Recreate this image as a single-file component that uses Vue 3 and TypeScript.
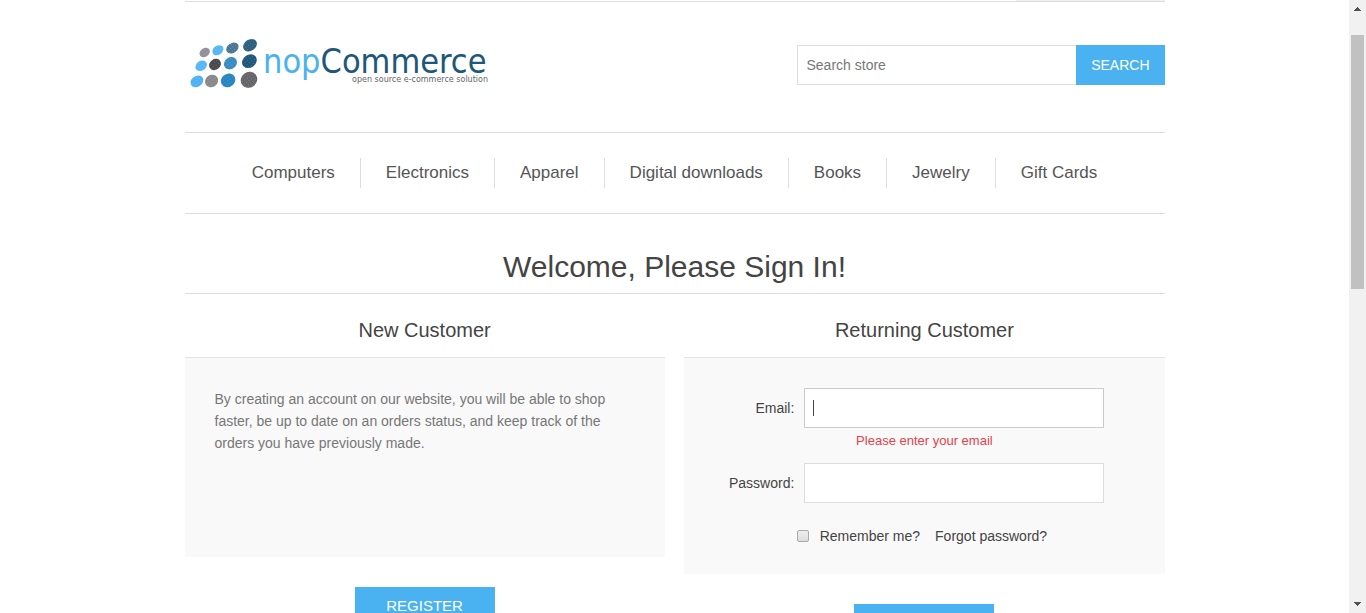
<script setup lang="ts">
import { ref } from 'vue'

interface Dot { x: number; y: number; rx: number; ry: number; fill: string }

const categories: string[] = ['Computers', 'Electronics', 'Apparel', 'Digital downloads', 'Books', 'Jewelry', 'Gift Cards']

const dots: Dot[] = [
  { x: 19.7, y: 17.5, rx: 5.6, ry: 4.2, fill: '#909095' },
  { x: 32.9, y: 15.2, rx: 6, ry: 4.5, fill: '#55b6f5' },
  { x: 47.4, y: 13, rx: 6.7, ry: 5, fill: '#487694' },
  { x: 65, y: 10.2, rx: 7.4, ry: 5.6, fill: '#2a5f80' },
  { x: 16.2, y: 30.8, rx: 6.2, ry: 4.8, fill: '#55b6f8' },
  { x: 30, y: 29.5, rx: 6.3, ry: 5.3, fill: '#48484b' },
  { x: 45.5, y: 28.2, rx: 6.9, ry: 5.8, fill: '#378bc2' },
  { x: 64.4, y: 26.2, rx: 7.8, ry: 6.4, fill: '#1e577a' },
  { x: 11.9, y: 46.4, rx: 6.9, ry: 5.4, fill: '#4eb1f2' },
  { x: 26.6, y: 46, rx: 6.8, ry: 6, fill: '#88888a' },
  { x: 43.1, y: 45.4, rx: 7.5, ry: 6.6, fill: '#2685c0' },
  { x: 64, y: 44.8, rx: 8.5, ry: 7.8, fill: '#656567' },
]

const search = ref('')
const email = ref('')
const password = ref('')
const remember = ref(false)
</script>

<template>
  <div class="window">
    <div class="viewport">
      <div class="page">
        <div class="flyout-edge"></div>
        <header class="header">
          <a href="#" class="logo" aria-label="nopCommerce">
            <svg width="310" height="55" viewBox="0 0 310 55">
              <defs>
                <pattern id="speckle" width="3" height="3" patternUnits="userSpaceOnUse">
                  <rect width="1" height="1" fill="#fff" opacity="0.22" />
                </pattern>
              </defs>
              <g v-for="(d, i) in dots" :key="i" :transform="`rotate(-35 ${d.x} ${d.y})`">
                <ellipse :cx="d.x" :cy="d.y" :rx="d.rx" :ry="d.ry" :fill="d.fill" />
                <ellipse :cx="d.x" :cy="d.y" :rx="d.rx" :ry="d.ry" fill="url(#speckle)" />
              </g>
              <text x="78" y="38" class="brand"><tspan class="brand-light">nop</tspan><tspan class="brand-dark">Commerce</tspan></text>
              <text x="303" y="47" class="tagline" text-anchor="end">open source e-commerce solution</text>
            </svg>
          </a>
          <form class="search" @submit.prevent>
            <input v-model="search" type="text" placeholder="Search store" aria-label="Search store" />
            <button type="submit">SEARCH</button>
          </form>
        </header>
        <nav class="menu">
          <ul>
            <li v-for="c in categories" :key="c"><a href="#">{{ c }}</a></li>
          </ul>
        </nav>
        <main>
          <h1>Welcome, Please Sign In!</h1>
          <div class="columns">
            <section class="column">
              <h2>New Customer</h2>
              <div class="panel intro">
                <p>By creating an account on our website, you will be able to shop faster, be up to date on an orders status, and keep track of the orders you have previously made.</p>
              </div>
              <button type="button" class="action">REGISTER</button>
            </section>
            <form class="column" novalidate @submit.prevent>
              <h2>Returning Customer</h2>
              <div class="panel">
                <div class="field">
                  <label for="email">Email:</label>
                  <div class="box active">
                    <input id="email" v-model="email" type="email" aria-describedby="email-error" />
                    <span v-if="!email" class="caret"></span>
                  </div>
                </div>
                <div id="email-error" class="error">Please enter your email</div>
                <div class="field">
                  <label for="password">Password:</label>
                  <div class="box"><input id="password" v-model="password" type="password" /></div>
                </div>
                <div class="options">
                  <input id="remember" v-model="remember" type="checkbox" />
                  <label for="remember">Remember me?</label>
                  <a href="#">Forgot password?</a>
                </div>
              </div>
              <button type="submit" class="action" aria-label="Log in"></button>
            </form>
          </div>
        </main>
      </div>
    </div>
    <div class="scrollbar" aria-hidden="true">
      <svg width="17" height="17" viewBox="0 0 17 17" shape-rendering="crispEdges"><path d="M8 7h1v1h1v1h1v1h1v1H5v-1h1V9h1V8h1z" fill="#505050" /></svg>
      <div class="track"><div class="thumb"></div></div>
      <svg width="17" height="17" viewBox="0 0 17 17" shape-rendering="crispEdges"><path d="M5 6h7v1h-1v1h-1v1H9v1H8V9H7V8H6V7H5z" fill="#505050" /></svg>
    </div>
  </div>
</template>

<style>
body {
  margin: 0;
  background: #fff;
}
</style>

<style scoped>
* {
  box-sizing: border-box;
}
.window {
  display: flex;
  height: 100vh;
  overflow: hidden;
  font: 14px/22px "Liberation Sans", Arial, sans-serif;
  color: #444;
}
.viewport {
  flex: 1;
  min-width: 0;
  overflow: hidden;
}
.page {
  max-width: 980px;
  margin: 0 auto;
}
input, button {
  margin: 0;
  font-family: inherit;
  font-size: 14px;
  border-radius: 0;
}
a {
  color: inherit;
  text-decoration: none;
}
.flyout-edge {
  width: 149px;
  height: 1px;
  margin-left: auto;
  background: #f0f0f0;
}
.header {
  display: flex;
  justify-content: space-between;
  align-items: flex-start;
  border-top: 1px solid #ddd;
  padding: 33px 0 42px;
}
.logo svg {
  display: block;
}
.brand {
  font: 34px "DejaVu Sans Condensed", "DejaVu Sans", sans-serif;
}
.brand-light {
  fill: #4ab2f1;
}
.brand-dark {
  fill: #1d5779;
}
.tagline {
  font: 8px "DejaVu Sans", sans-serif;
  fill: #666;
}
.search {
  display: flex;
  width: 368px;
  margin-top: 10px;
}
.search input {
  flex: 1;
  min-width: 0;
  height: 40px;
  padding: 0 9px;
  border: 1px solid #ddd;
  border-right: 0;
  color: #777;
}
.search input::placeholder {
  color: #777;
  opacity: 1;
}
.search button {
  padding: 0 15px;
  border: 0;
  background: #4ab2f1;
  color: #fff;
}
.menu {
  border: 1px solid #ddd;
  border-width: 1px 0;
  padding: 25px 0;
}
.menu ul {
  display: flex;
  justify-content: center;
  margin: 0;
  padding: 0;
  list-style: none;
}
.menu li {
  padding: 0 25px;
  font-size: 17px;
  line-height: 30px;
  color: #555;
}
.menu li + li {
  border-left: 1px solid #ddd;
}
h1, h2 {
  margin: 0;
  font-weight: normal;
  text-align: center;
}
h1 {
  padding: 33px 0 6px;
  border-bottom: 1px solid #ddd;
  font-size: 30px;
  line-height: 40px;
}
.columns {
  display: flex;
  justify-content: space-between;
  align-items: flex-start;
}
.column {
  width: 49%;
}
h2 {
  padding: 21px 0 12px;
  font-size: 20px;
  line-height: 30px;
}
.panel {
  padding: 30px 0 27px;
  border-top: 1px solid #e4e4e4;
  background: #f9f9f9;
}
.intro {
  min-height: 200px;
  padding: 30px;
}
.intro p {
  margin: 0;
  color: #777;
}
.field {
  display: flex;
  align-items: center;
  gap: 10px;
  padding-right: 60px;
}
.field label {
  width: 110px;
  text-align: right;
}
.box {
  position: relative;
  flex: 1;
  max-width: 300px;
}
.box input {
  display: block;
  width: 100%;
  height: 40px;
  padding: 0 8px;
  border: 1px solid #ddd;
  background: #fff;
  outline: 0;
}
.box.active input {
  border-color: #ccc;
}
.caret {
  position: absolute;
  top: 12px;
  left: 9px;
  width: 1px;
  height: 16px;
  background: #444;
}
.error {
  padding-bottom: 10px;
  font-size: 13px;
  line-height: 25px;
  text-align: center;
  color: #e4434b;
}
.options {
  display: flex;
  justify-content: center;
  align-items: center;
  margin-top: 22px;
  padding-right: 5px;
}
.options input {
  appearance: none;
  width: 12px;
  height: 12px;
  margin-right: 11px;
  border: 1px solid #aaa;
  border-radius: 2px;
  background: linear-gradient(#eee, #ddd);
}
.options input:checked {
  background: #4ab2f1;
}
.options a {
  margin-left: 15px;
}
.action {
  display: block;
  width: 140px;
  height: 36px;
  margin: 30px auto;
  padding: 0;
  border: 0;
  background: #4ab2f1;
  color: #fff;
  font-size: 15px;
}
.scrollbar {
  display: flex;
  flex-direction: column;
  width: 17px;
  background: #f1f1f1;
}
.scrollbar svg {
  display: block;
}
.track {
  display: grid;
  grid-template-rows: 18fr 254fr 307fr;
  flex: 1;
  padding: 0 2px;
}
.thumb {
  grid-row: 2;
  background: #c1c1c1;
}
</style>
